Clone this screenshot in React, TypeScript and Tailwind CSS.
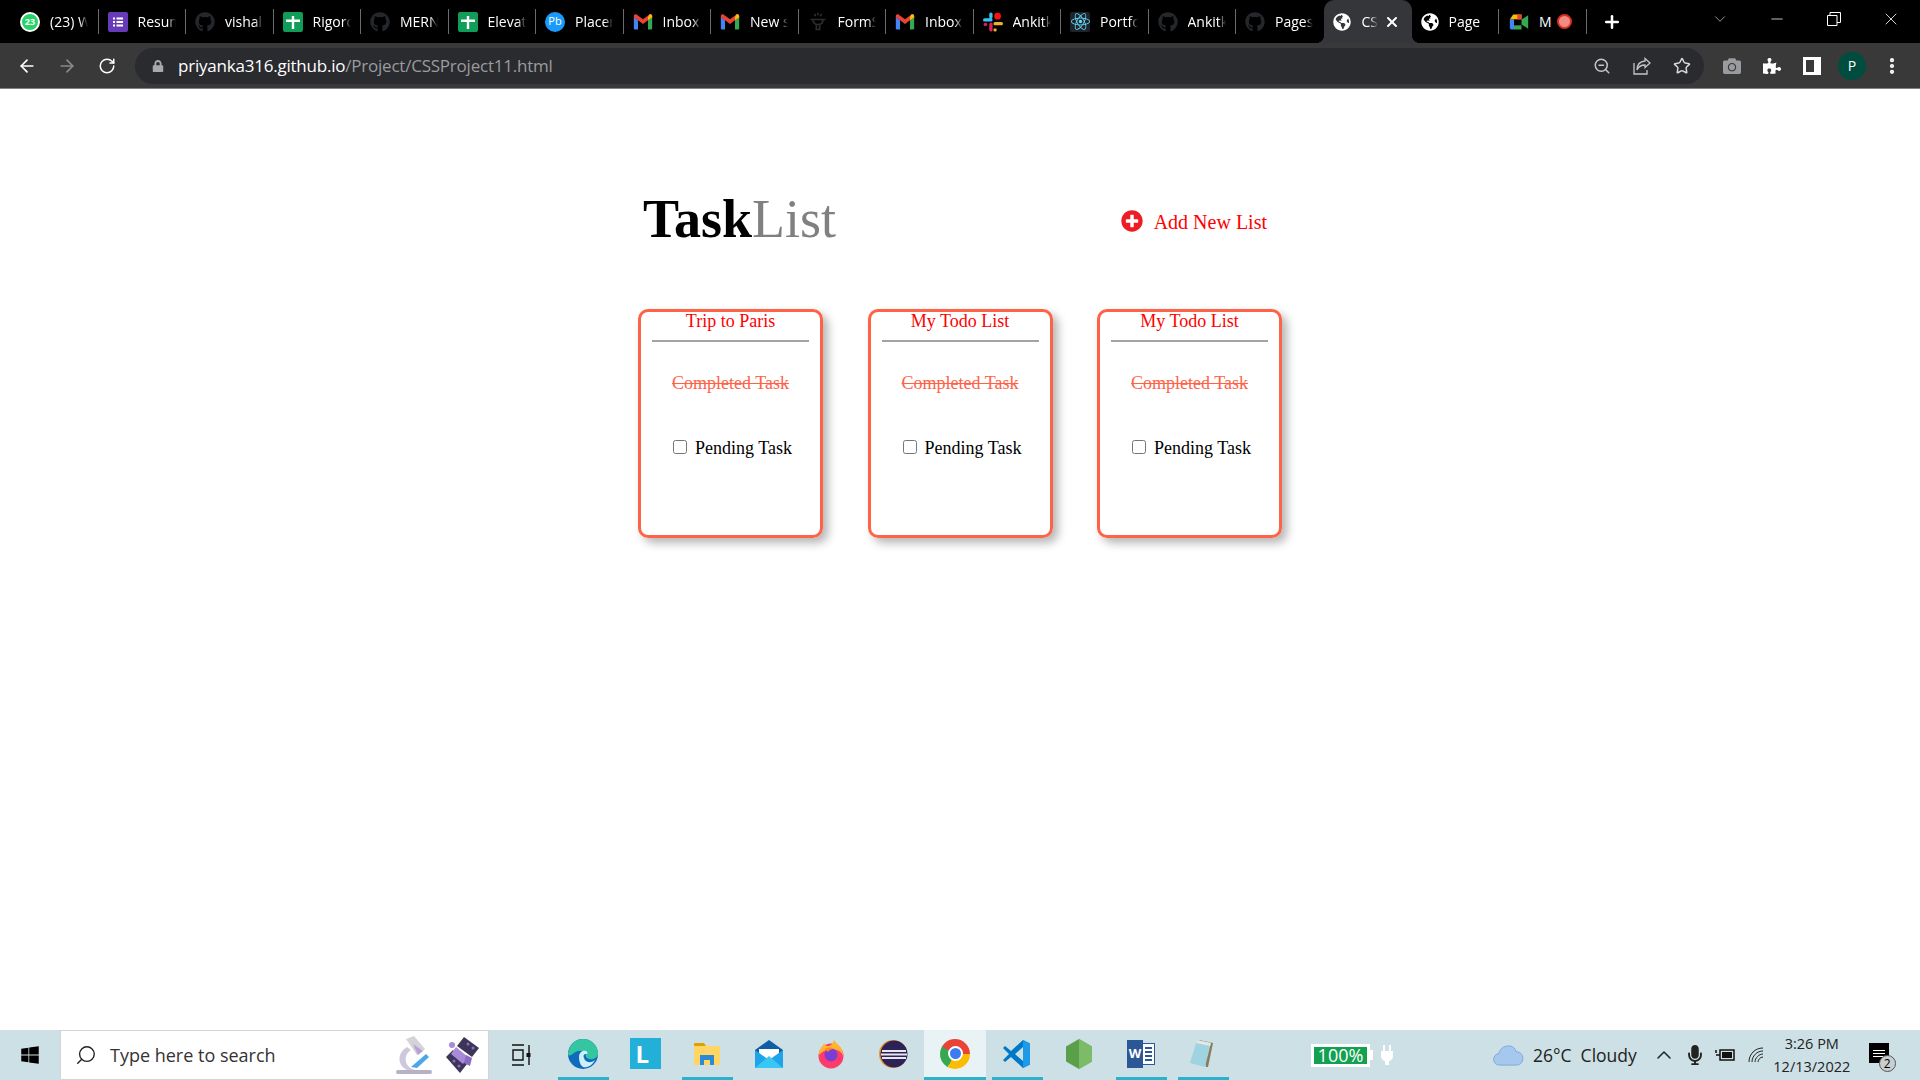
import React from 'react';
import { ArrowLeft, ArrowRight, RotateCw, Star, Plus, X, Minus, ChevronDown, ChevronUp, Search, EllipsisVertical, ZoomOut } from 'lucide-react';
import { FaGithub, FaReact, FaWindows, FaGlobeAmericas, FaPuzzlePiece, FaCamera, FaMicrophone, FaLock, FaPlusCircle } from 'react-icons/fa';

const Sheets = () => (
  <div className="w-5 h-5 rounded-[2px] bg-[#0f9d58] flex items-center justify-center">
    <svg viewBox="0 0 20 20" className="w-5 h-5"><path d="M3 7.500h14v2.400H3zM8.800 4h2.400v13H8.800z" fill="#fff" /></svg>
  </div>
);

const Forms = () => (
  <div className="w-5 h-5 rounded-[2px] bg-[#673ab7]">
    <svg viewBox="0 0 20 20" className="w-5 h-5"><path d="M5 5.500h2v2H5zM5 9h2v2H5zM5 12.500h2v2H5zM8.500 5.500H15v2H8.500zM8.500 9H15v2H8.500zM8.500 12.500H15v2H8.500z" fill="#fff" /></svg>
  </div>
);

const Gmail = () => (
  <svg viewBox="0 0 24 24" className="w-5 h-5">
    <path d="M1 6v13.500A1.500 1.500 0 0 0 2.500 21H6V10z" fill="#4285f4" />
    <path d="M23 6v13.500a1.500 1.500 0 0 1-1.500 1.500H18V10z" fill="#34a853" />
    <path d="M6 10 1 6.500V5c0-2 2.200-2.800 3.600-1.800L12 8.800l7.400-5.600C20.800 2.200 23 3 23 5v1.500L18 10l-6 4.500z" fill="#ea4335" />
    <path d="M18 5.900 19.400 3.200C20.800 2.200 23 3 23 5v1.500L18 10z" fill="#fbbc04" />
  </svg>
);

const Slack = () => (
  <svg viewBox="0 0 24 24" className="w-5 h-5">
    <path d="M2 9.500h7.500M9.500 2.500v3.500" stroke="#36c5f0" strokeWidth="4" strokeLinecap="round" />
    <circle cx="17.500" cy="5" r="4" fill="#ff1010" />
    <path d="M9.500 14.500v7" stroke="#e01e5a" strokeWidth="4" strokeLinecap="round" />
    <path d="M14.500 14h7.500M14.500 21.500v0" stroke="#ecb22e" strokeWidth="4" strokeLinecap="round" />
    <circle cx="3" cy="15" r="2.200" fill="#e01e5a" />
  </svg>
);

const ReactTile = () => (
  <div className="w-5 h-5 rounded-[2px] bg-[#20232a] flex items-center justify-center text-[#61dafb]">
    <FaReact size={19} />
  </div>
);

const Meet = () => (
  <svg viewBox="0 0 24 24" className="w-5 h-5">
    <path d="M5 3h10v6H1z" fill="#fbbc04" />
    <path d="M1 9h5v12H3a2 2 0 0 1-2-2z" fill="#4285f4" />
    <path d="M6 9h9v12H6z" fill="#000" />
    <path d="M15 3v6h-5V3z" fill="#ea4335" />
    <path d="M6 16h9v5H6z" fill="#34a853" />
    <path d="M15 9l8-5v16l-8-5z" fill="#34a853" />
  </svg>
);

const Bulb = () => (
  <svg viewBox="0 0 24 24" className="w-5 h-5" fill="none" stroke="#2a2c30" strokeWidth="2">
    <path d="M3 9h18M6 9c0 5 3 6 6 6s6-1 6-6M10 15v6h4v-6M8 2l1 3M12 1v3M16 2l-1 3" />
  </svg>
);

const tabs = [
  { icon: <div className="w-5 h-5 rounded-full bg-[#25d366] border-2 border-white text-white text-[9px] font-bold flex items-center justify-center">23</div>, label: '(23) WhatsApp' },
  { icon: <Forms />, label: 'Resume' },
  { icon: <FaGithub size={20} color="#24272b" />, label: 'vishal' },
  { icon: <Sheets />, label: 'Rigorous' },
  { icon: <FaGithub size={20} color="#24272b" />, label: 'MERN' },
  { icon: <Sheets />, label: 'Elevate' },
  { icon: <div className="w-5 h-5 rounded-full bg-[#1a9bfc] text-white text-[11px] flex items-center justify-center">Pb</div>, label: 'Placement' },
  { icon: <Gmail />, label: 'Inbox' },
  { icon: <Gmail />, label: 'New sale' },
  { icon: <Bulb />, label: 'FormSubmit' },
  { icon: <Gmail />, label: 'Inbox' },
  { icon: <Slack />, label: 'Ankitkr' },
  { icon: <ReactTile />, label: 'Portfolio' },
  { icon: <FaGithub size={20} color="#24272b" />, label: 'Ankitkr' },
  { icon: <FaGithub size={20} color="#24272b" />, label: 'Pages' },
];

const TabItem = ({ icon, label, noLine }: { icon: React.ReactNode; label: string; noLine?: boolean }) => (
  <div className="w-[87.5px] h-full flex items-center pl-[9px] shrink-0">
    {icon}
    <span className="ml-[10px] w-[38px] overflow-hidden whitespace-nowrap text-[14px] text-white [mask-image:linear-gradient(to_right,black_78%,transparent)]">{label}</span>
    <div className={noLine ? 'ml-auto w-px h-[25px]' : 'ml-auto w-px h-[25px] bg-[#6a6b6e]'} />
  </div>
);

const Card = ({ title }: { title: string }) => (
  <div className="w-[185px] h-[229px] border-[3px] border-[#ff6347] rounded-[10px] shadow-[5px_5px_10px_#b5b5b5] px-[11px] text-[18px]">
    <div className="text-center text-[#ff0000] leading-[18px]">{title}</div>
    <div className="mt-[10px] h-[2px] bg-[#a3a3a3]" />
    <div className="mt-[31px] text-center text-[#ff6347] line-through leading-[20px]">Completed Task</div>
    <div className="mt-[45px] flex items-center pl-[21px] text-black leading-[20px]">
      <input type="checkbox" className="w-[14px] h-[14px] -mt-[3px] m-0" readOnly />
      <span className="ml-[8px] whitespace-nowrap">Pending Task</span>
    </div>
  </div>
);

const Cell = ({ on, children }: { on?: boolean; children: React.ReactNode }) => (
  <div className="w-[62px] h-full flex flex-col items-center shrink-0">
    <div className="flex-1 flex items-center justify-center">{children}</div>
    <div className={on ? 'w-[51px] h-[3px] bg-[#2bb2cc]' : 'w-[51px] h-[3px]'} />
  </div>
);

export default function App() {
  return (
    <div className="h-screen flex flex-col overflow-hidden bg-white font-['Open_Sans',sans-serif]">
      {/* tab strip */}
      <div className="h-[43px] bg-black flex items-center pl-[11px] shrink-0">
        {tabs.map((t, i) => (
          <TabItem key={i} icon={t.icon} label={t.label} noLine={i === 14} />
        ))}
        <div className="relative w-[88px] h-full bg-[#35363a] rounded-t-[10px] flex items-center pl-[9px] shrink-0">
          <div className="absolute -left-2 bottom-0 w-2 h-2 bg-[radial-gradient(circle_at_0_0,transparent_8px,#35363a_8px)]" />
          <div className="absolute -right-2 bottom-0 w-2 h-2 bg-[radial-gradient(circle_at_100%_0,transparent_8px,#35363a_8px)]" />
          <FaGlobeAmericas size={18} color="#fff" />
          <span className="ml-[11px] w-[16px] overflow-hidden whitespace-nowrap text-[14px] text-white [mask-image:linear-gradient(to_right,black_50%,transparent)]">CSS</span>
          <X size={16} color="#fff" strokeWidth={3} className="ml-[6px]" />
        </div>
        <TabItem icon={<FaGlobeAmericas size={18} color="#fff" />} label="Page" />
        <div className="w-[87.5px] h-full flex items-center pl-[10px] shrink-0">
          <Meet />
          <span className="ml-[10px] text-[14px] text-white">M</span>
          <div className="ml-[5px] w-[15px] h-[15px] rounded-full bg-[#f28b82] border-2 border-[#d93025]" />
          <div className="ml-auto w-px h-[25px] bg-[#6a6b6e]" />
        </div>
        <Plus size={20} color="#fff" strokeWidth={3} className="ml-[15px]" />
        <div className="ml-auto flex items-center h-full -mt-[6px] pr-[1px]">
          <div className="w-[57px] flex justify-center"><ChevronDown size={18} color="#c4c4c4" strokeWidth={1} /></div>
          <div className="w-[57px] flex justify-center"><Minus size={18} color="#fff" strokeWidth={1} /></div>
          <div className="w-[57px] flex justify-center">
            <svg viewBox="0 0 14 14" className="w-[14px] h-[14px]" fill="none" stroke="#fff" strokeWidth="1"><path d="M.5 3.500h9.500v10H.5zM3 3.500V.5h10.500v10H10" /></svg>
          </div>
          <div className="w-[57px] flex justify-center"><X size={20} color="#fff" strokeWidth={1} /></div>
        </div>
      </div>

      {/* address bar */}
      <div className="h-[46px] bg-[#393939] border-b border-[#808080] flex items-center pl-[7px] shrink-0">
        <div className="w-[40px] flex justify-center"><ArrowLeft size={20} color="#fff" strokeWidth={2} /></div>
        <div className="w-[40px] flex justify-center"><ArrowRight size={20} color="#8a8b8e" strokeWidth={2} /></div>
        <div className="w-[40px] flex justify-center"><RotateCw size={18} color="#fff" strokeWidth={2} /></div>
        <div className="ml-[8px] w-[1569px] h-[36px] rounded-full bg-[#2a2b2f] flex items-center pl-[17px] pr-[2px]">
          <FaLock size={12} color="#a8a9ad" />
          <span className="ml-[14px] text-[17px] tracking-[-0.22px] text-white">priyanka316.github.io<span className="text-[#9a9b9e]">/Project/CSSProject11.html</span></span>
          <div className="ml-auto flex">
            <div className="w-[40px] flex justify-center"><ZoomOut size={18} color="#c4c5c8" /></div>
            <div className="w-[40px] flex justify-center">
              <svg viewBox="0 0 18 18" className="w-[18px] h-[18px]" fill="none" stroke="#c4c5c8" strokeWidth="1.300"><path d="M12 1.500l5 4.500-5 4.500V8C8 8 5.500 9.500 4 13c0-5 3-8.500 8-9zM1 6v11h13v-4" /></svg>
            </div>
            <div className="w-[40px] flex justify-center"><Star size={18} color="#d8d9dc" /></div>
          </div>
        </div>
        <div className="ml-[8px] flex items-center">
          <div className="w-[40px] flex justify-center"><FaCamera size={18} color="#9a9b9e" /></div>
          <div className="w-[40px] flex justify-center"><FaPuzzlePiece size={18} color="#fff" /></div>
          <div className="w-[40px] flex justify-center">
            <div className="w-[18px] h-[18px] border-[3px] border-r-[7px] border-white" />
          </div>
          <div className="w-[40px] flex justify-center">
            <div className="w-[28px] h-[28px] rounded-full bg-[#004d40] text-white text-[14px] flex items-center justify-center">P</div>
          </div>
          <div className="w-[40px] flex justify-center"><EllipsisVertical size={20} color="#fff" strokeWidth={3} /></div>
        </div>
      </div>

      {/* page */}
      <div className="flex-1 font-['Liberation_Serif',serif]">
        <div className="w-[644px] mx-auto">
          <div className="flex items-center pt-[96px] pl-[5px] h-[165px]">
            <h1 className="text-[54px] leading-[60px] font-bold text-black -mt-[1px]">Task<span className="font-normal text-[#808080]">List</span></h1>
            <div className="ml-auto mr-[15px] mt-[5px] flex items-center text-[20px] text-[#ff0000]">
              <FaPlusCircle size={22} color="#ee1c25" className="-mt-[3px]" />
              <span className="ml-[11px]">Add New List</span>
            </div>
          </div>
          <div className="mt-[55px] flex gap-[44.5px]">
            <Card title="Trip to Paris" />
            <Card title="My Todo List" />
            <Card title="My Todo List" />
          </div>
        </div>
      </div>

      {/* taskbar */}
      <div className="h-[50px] bg-[#cce0e5] flex items-center shrink-0">
        <div className="w-[60px] flex justify-center"><FaWindows size={20} color="#000" /></div>
        <div className="w-[429px] h-full bg-white border border-[#d4d4d4] flex items-center pl-[14px]">
          <Search size={22} color="#222" strokeWidth={1.500} className="-scale-x-100" />
          <span className="ml-[13px] text-[18px] text-[#333]">Type here to search</span>
          <div className="ml-auto mr-[6px] flex items-center gap-[8px]">
            <svg viewBox="0 0 40 40" className="w-[40px] h-[40px]">
              <path d="M4 35h32a1.500 1.500 0 0 1 0 4H4a1.500 1.500 0 0 1 0-4z" fill="#b7b0c9" />
              <path d="M13 12C3 18 3 30 13 35h8C10 32 9 20 17 15z" fill="#cfc8dc" />
              <path d="M12 4l8-3 11 13-8 6z" fill="#d3d3d8" />
              <path d="M19 9l10 7-5 4z" fill="#b79fd8" />
              <path d="M17 32l15-13 3 3-12 11z" fill="#4aa8e8" />
            </svg>
            <svg viewBox="0 0 40 40" className="w-[40px] h-[40px]">
              <path d="M22 2l15 11-7 9-15-11z" fill="#3d3558" />
              <path d="M4 22l7-7 14 14-7 9z" fill="#3d3558" />
              <path d="M14 12l12 10-5 7-12-10z" fill="#a98ad8" />
              <path d="M24 20l6 3-2 8-6-3z" fill="#8a6cc0" />
              <circle cx="10" cy="10" r="3" fill="#a98ad8" />
              <circle cx="26" cy="9" r="1.500" fill="#8a6cc0" /><circle cx="31" cy="13" r="1.500" fill="#8a6cc0" />
              <circle cx="12" cy="26" r="1.500" fill="#8a6cc0" /><circle cx="17" cy="31" r="1.500" fill="#8a6cc0" />
            </svg>
          </div>
        </div>
        <div className="w-[63px] flex justify-center">
          <svg viewBox="0 0 20 22" className="w-[20px] h-[22px]" fill="none" stroke="#111" strokeWidth="1.400"><path d="M1 1h12M1 21h12M2 6h10v10H2zM18 1v20" /><path d="M15.500 9h4v4h-4z" fill="#111" stroke="none" /></svg>
        </div>
        <Cell on>
          <svg viewBox="0 0 32 32" className="w-[32px] h-[32px]">
            <circle cx="16" cy="16" r="15" fill="#0f6cbd" />
            <path d="M1 16C2 6 9 1 16 1c9 0 15 7 15 14 0 5-5 7-9 6-3-1-4-3-3-5-2-4-8-4-12-1-3 2-5 4-6 1z" fill="#34c6a0" />
            <path d="M12 19c0-4 3-7 7-6 2 1 2 3 0 3-2 0-3 1-2 4 1 4 6 6 11 2-3 6-8 8-12 7-3-2-4-6-4-10z" fill="#cfeefa" />
          </svg>
        </Cell>
        <Cell>
          <div className="w-[31px] h-[31px] bg-[#22b0d8] flex items-center pl-[6px] text-white text-[24px] font-bold">L</div>
        </Cell>
        <Cell on>
          <svg viewBox="0 0 28 28" className="w-[28px] h-[28px]">
            <path d="M1 4a1 1 0 0 1 1-1h9l2 3H1z" fill="#e0a100" />
            <path d="M1 6h26v19H1z" fill="#ffd566" />
            <path d="M7 15h14v10h-4v-5h-6v5H7z" fill="#2b89d6" />
          </svg>
        </Cell>
        <Cell>
          <svg viewBox="0 0 30 30" className="w-[30px] h-[30px]">
            <path d="M15 1L1 11v18h28V11z" fill="#0f5ea8" />
            <path d="M5 10h20v8l-10 6-10-6z" fill="#fff" />
            <path d="M1 11l14 10 14-10v18H1z" fill="#1fa4ea" />
            <path d="M1 29l14-12 14 12z" fill="#38c6f4" />
          </svg>
        </Cell>
        <Cell>
          <svg viewBox="0 0 30 30" className="w-[30px] h-[30px]">
            <circle cx="15" cy="17" r="12.500" fill="#ff3b6b" />
            <path d="M3 16C3 9 7 8 8 4c1 3 3 3 5 3 3-1 4-3 5-6 2 4 9 6 9 16-2-5-6-7-12-7-5 0-9 3-12 6z" fill="#ffb52e" />
            <circle cx="15" cy="16" r="6.500" fill="#7a3ed6" />
            <path d="M9 10c3-2 7-2 9 0-3 0-5 1-6 3z" fill="#ff8a1f" />
          </svg>
        </Cell>
        <Cell>
          <svg viewBox="0 0 30 30" className="w-[30px] h-[30px]">
            <circle cx="15" cy="15" r="14" fill="#e8962f" />
            <circle cx="16" cy="15" r="13.500" fill="#2c2255" />
            <path d="M4 11h24v2H4zM3 14.500h26v2H3zM4 18h24v2H4z" fill="#e8e6ef" />
          </svg>
        </Cell>
        <div className="w-[62px] h-full bg-[#e9f2f4] flex flex-col items-center shrink-0">
          <div className="flex-1 flex items-center justify-center">
            <div className="w-[30px] h-[30px] rounded-full bg-[conic-gradient(#ea4335_0deg_90deg,#fbbc04_90deg_210deg,#34a853_210deg_300deg,#ea4335_300deg_360deg)] flex items-center justify-center">
              <div className="w-[15px] h-[15px] rounded-full bg-[#3b7cf0] border-[2px] border-white" />
            </div>
          </div>
          <div className="w-full h-[3px] bg-[#2bb2cc]" />
        </div>
        <Cell on>
          <svg viewBox="0 0 30 30" className="w-[30px] h-[30px]">
            <path d="M21 1l7 3.500v21L21 29 9 18l-6 5-2-2 6-6-6-6 2-2 6 5z" fill="#0078c8" />
            <path d="M21 1l7 3.500v21L21 29z" fill="#1e9be8" />
            <path d="M21 8l-8 7 8 7z" fill="#cce0e5" />
          </svg>
        </Cell>
        <Cell>
          <svg viewBox="0 0 26 30" className="w-[26px] h-[30px]">
            <path d="M13 0l13 7.500v15L13 30 0 22.500v-15z" fill="#5aa04a" />
            <path d="M13 0l13 7.500v15L13 30z" fill="#7cbb68" />
          </svg>
        </Cell>
        <Cell on>
          <div className="relative w-[28px] h-[28px]">
            <div className="absolute right-0 top-[3px] w-[20px] h-[22px] bg-white border border-[#2b5797] flex flex-col justify-center gap-[2px] pl-[9px] pr-[2px]">
              <div className="h-[2px] bg-[#2b5797]" /><div className="h-[2px] bg-[#2b5797]" /><div className="h-[2px] bg-[#2b5797]" /><div className="h-[2px] bg-[#2b5797]" />
            </div>
            <div className="absolute left-0 top-0 w-[16px] h-[28px] bg-[#2b5797] text-white text-[13px] font-bold flex items-center justify-center">W</div>
          </div>
        </Cell>
        <Cell on>
          <svg viewBox="0 0 28 32" className="w-[28px] h-[32px]">
            <path d="M10 2l14 3-5 24-2 0z" fill="#8a7a5a" />
            <path d="M8 2l14 3-6 24L1 25z" fill="#9fd3e0" />
            <path d="M8 2l14 3-1 3L7 5z" fill="#e6e6e6" />
          </svg>
        </Cell>

        {/* tray */}
        <div className="ml-[77px] h-[23px] w-[59px] border-[3px] border-white bg-[#12a150] text-white text-[18px] leading-[17px] text-center">100%</div>
        <div className="w-[3px] h-[10px] bg-white" />
        <svg viewBox="0 0 12 20" className="ml-[8px] w-[12px] h-[20px]" fill="#fff">
          <path d="M2 0h2v6H2zM8 0h2v6H8zM0 6h12v5a5 5 0 0 1-4 5v4H4v-4a5 5 0 0 1-4-5z" />
        </svg>
        <svg viewBox="0 0 32 24" className="ml-[100px] w-[31px] h-[23px]">
          <path d="M7 22a6 6 0 0 1-1-12c1-5 5-8 10-8 4 0 7 2 8 6 4 0 7 3 7 7s-3 7-7 7z" fill="#a7c8ee" stroke="#7ba6dc" strokeWidth="1" />
        </svg>
        <span className="ml-[9px] text-[17.5px] text-[#222] whitespace-pre">26°C  Cloudy</span>
        <ChevronUp size={24} color="#222" strokeWidth={1.500} className="ml-[15px]" />
        <FaMicrophone size={20} color="#222" className="ml-[9px]" />
        <svg viewBox="0 0 20 16" className="ml-[10px] w-[20px] h-[16px]" fill="none" stroke="#111" strokeWidth="1.500">
          <path d="M5 3h14v10H5zM1 8h4M1 3v3" />
          <path d="M7 5h10v6H7z" fill="#111" stroke="none" />
        </svg>
        <svg viewBox="0 0 16 16" className="ml-[13px] w-[16px] h-[16px]" fill="none" stroke="#222" strokeWidth="1">
          <path d="M1 15C1 7 7 1 15 1M4 15c0-6 5-11 11-11M7 15c0-4 4-8 8-8M10 15c0-2 2-5 5-5" />
        </svg>
        <div className="ml-[10px] flex flex-col items-center text-[14.5px] leading-[23px] text-[#222] w-[76px]">
          <span>3:26 PM</span>
          <span>12/13/2022</span>
        </div>
        <div className="relative ml-[19px] w-[20px] h-[20px] -mt-[4px] bg-black flex flex-col justify-center gap-[2px] px-[4px]">
          <div className="h-px bg-white" /><div className="h-px bg-white" /><div className="h-px bg-white" />
          <div className="absolute -right-[7px] -bottom-[9px] w-[17px] h-[17px] rounded-full bg-[#c9cfd1] border border-[#555] text-[12px] leading-[15px] text-center text-black">2</div>
        </div>
      </div>
    </div>
  );
}
